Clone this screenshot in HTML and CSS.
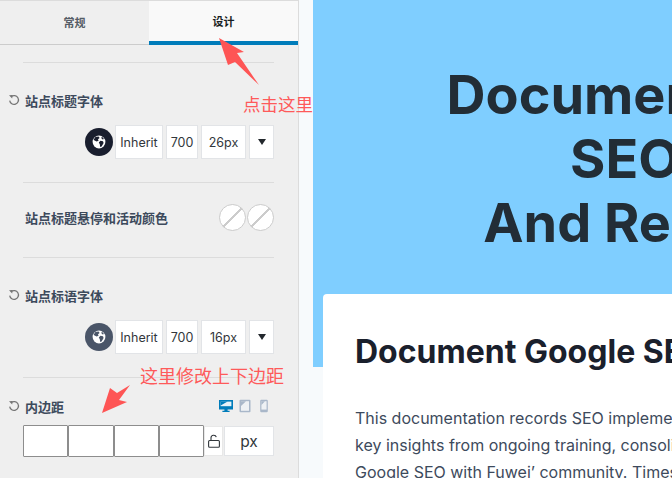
FILE: index.html
```html
<!DOCTYPE html>
<html lang="zh-CN">
<head>
  <meta charset="UTF-8" />
  <meta name="viewport" content="width=device-width, initial-scale=1.0" />
  <title>站点标题字体</title>
  <link rel="stylesheet" href="styles.css">
</head>
<body>
  <div class="page">
    <aside class="sidebar">
      <div class="tabs">
        <div class="tab">常规</div>
        <div class="tab tab-active">设计</div>
      </div>

      <div class="panel">
        <hr class="rule rule-first">

        <div class="label-row label-first">
          <svg class="reset" viewBox="0 0 12 12"><path d="M3.2 2.6A4.4 4.4 0 1 1 1.7 6.6" /><path class="reset-head" d="M1 1.2 4.6 1 4.2 4.4z" /></svg>
          <span>站点标题字体</span>
        </div>
        <div class="font-row">
          <span class="globe">
            <svg viewBox="0 0 14 14"><circle cx="7" cy="7" r="6.4" fill="#fff" /><path class="land" d="M3.4 1.9 6.6 1.4 7.6 3 6 4.2 6.6 5.8 4.6 6.6 2.6 5.4 1.6 4.8zM8.4 5.8 11 6.2 11.6 8 9.6 11.6 8.2 12 7.8 9.2 6.8 7.4zM10 1.8 12 4 10.6 4.4 9.2 3z" /></svg>
          </span>
          <div class="box box-family">Inherit</div>
          <div class="box box-weight">700</div>
          <div class="box box-size">26px</div>
          <div class="box box-more"><i class="caret"></i></div>
        </div>

        <hr class="rule rule-mid">

        <div class="color-row">
          <span class="color-label">站点标题悬停和活动颜色</span>
          <div class="swatches">
            <i class="swatch"></i>
            <i class="swatch"></i>
          </div>
        </div>

        <hr class="rule rule-color">

        <div class="label-row label-first">
          <svg class="reset" viewBox="0 0 12 12"><path d="M3.2 2.6A4.4 4.4 0 1 1 1.7 6.6" /><path class="reset-head" d="M1 1.2 4.6 1 4.2 4.4z" /></svg>
          <span>站点标语字体</span>
        </div>
        <div class="font-row">
          <span class="globe globe-soft">
            <svg viewBox="0 0 14 14"><circle cx="7" cy="7" r="6.4" fill="#fff" /><path class="land" d="M3.4 1.9 6.6 1.4 7.6 3 6 4.2 6.6 5.8 4.6 6.6 2.6 5.4 1.6 4.8zM8.4 5.8 11 6.2 11.6 8 9.6 11.6 8.2 12 7.8 9.2 6.8 7.4zM10 1.8 12 4 10.6 4.4 9.2 3z" /></svg>
          </span>
          <div class="box box-family">Inherit</div>
          <div class="box box-weight">700</div>
          <div class="box box-size">16px</div>
          <div class="box box-more"><i class="caret"></i></div>
        </div>

        <hr class="rule rule-mid">

        <div class="label-row label-padding">
          <svg class="reset" viewBox="0 0 12 12"><path d="M3.2 2.6A4.4 4.4 0 1 1 1.7 6.6" /><path class="reset-head" d="M1 1.2 4.6 1 4.2 4.4z" /></svg>
          <span>内边距</span>
          <div class="devices">
            <svg class="device" viewBox="0 0 14 14"><path fill="#007cba" d="M0 1h14v9.4H8.6v1.4h2v1.2H3.4v-1.2h2v-1.4H0z" /><path fill="#fff" d="M1.6 2.6h10.8v4.6H1.6z" opacity=".9" /><path fill="#007cba" d="M1.6 2.6h7l-7 4z" /></svg>
            <svg class="device" viewBox="0 0 14 14"><rect x="1.5" y=".8" width="11" height="12.4" rx="1" fill="#a9b7c9" /><path fill="#eef1f4" d="M3 2.2h8v9.6H3z" /><path fill="#a9b7c9" d="M3 2.2h5L3 7z" /></svg>
            <svg class="device" viewBox="0 0 14 14"><rect x="3.2" y=".8" width="7.6" height="12.4" rx="1.2" fill="#a9b7c9" /><path fill="#eef1f4" d="M4.4 2.2h5.2v8.4H4.4z" /><path fill="#a9b7c9" d="M4.4 2.2h3.6L4.4 6z" /></svg>
          </div>
        </div>
        <div class="spacing-row">
          <div class="spacing-inputs">
            <input class="spacing" type="text">
            <input class="spacing" type="text">
            <input class="spacing" type="text">
            <input class="spacing" type="text">
          </div>
          <div class="box box-lock">
            <svg viewBox="0 0 12 14"><path d="M3 6.5V3.8a2.7 2.7 0 0 1 5.3-.6" /><rect x=".6" y="6.5" width="10.8" height="6.7" rx="1" /></svg>
          </div>
          <div class="box box-unit">px</div>
        </div>
      </div>
    </aside>

    <main class="site">
      <section class="hero">
        <h1 class="hero-title">Document Google<br>SEO Ads<br>And Resources</h1>
      </section>
      <article class="card">
        <h2 class="card-title">Document Google SEO Implementation</h2>
        <p class="card-text">This documentation records SEO implementation steps and<br>key insights from ongoing training, consolidating what I learn<br>Google SEO with Fuwei’ community. Timestamps are included</p>
      </article>
    </main>
  </div>

  <!-- red notes drawn on top of the screenshot -->
  <svg class="arrows" viewBox="0 0 672 478">
    <path d="M219 38 244 52 237 53 259 85 235 62 228 65z" />
    <path d="M102 413 110 388 117 393 130 385 119 400 127 402z" />
  </svg>
  <div class="note note-click">点击这里</div>
  <div class="note note-padding">这里修改上下边距</div>
</body>
</html>
```

FILE: styles.css
```css
* {
  margin: 0;
  padding: 0;
  box-sizing: border-box;
}
html, body {
  width: 672px;
  height: 478px;
  overflow: hidden;
}
body {
  position: relative;
  background: #f7fafc;
  font-family: Inter, "Noto Sans CJK SC", sans-serif;
}
.page {
  display: flex;
  height: 478px;
}

/* sidebar */
.sidebar {
  flex: 0 0 299px;
  min-width: 0;
  height: 478px;
  background: #efefef;
  border-top: 1px solid #dcdcdc;
  border-right: 1px solid #dcdcdc;
}
.tabs {
  display: flex;
  height: 44px;
}
.tab {
  flex: 1;
  display: flex;
  align-items: center;
  justify-content: center;
  padding-bottom: 2px;
  font-size: 11px;
  font-weight: 700;
  color: #555d66;
  border-bottom: 1px solid #ccc;
}
.tab-active {
  padding-bottom: 0;
  background: #f9f9f9;
  color: #191e23;
  border-bottom: 4px solid #007cba;
}
.panel {
  padding: 0 24px 0 8px;
}
.rule {
  border: 0;
  height: 1px;
  margin-left: 15px;
  background: #dcdcdc;
}
.rule-first {
  margin-top: 17px;
}
.rule-mid {
  margin-top: 23px;
}
.rule-color {
  margin-top: 26px;
}
.label-row {
  display: flex;
  align-items: center;
  gap: 5px;
  height: 20px;
  font-size: 13px;
  font-weight: 700;
  color: #3d4a5c;
}
.label-first {
  margin-top: 27px;
}
.label-padding {
  margin-top: 18px;
}
.reset {
  width: 12px;
  height: 12px;
  fill: none;
  stroke: #757575;
  stroke-width: 1.3;
}
.reset-head {
  fill: #757575;
  stroke: none;
}
.font-row {
  display: flex;
  align-items: center;
  justify-content: flex-end;
  gap: 3px;
  margin-top: 15px;
}
.globe {
  display: flex;
  align-items: center;
  justify-content: center;
  width: 28px;
  height: 28px;
  margin-right: -1px;
  border-radius: 50%;
  background: #191e2e;
}
.globe svg {
  width: 14px;
  height: 14px;
}
.land {
  fill: #191e2e;
}
.globe-soft {
  background: #4a5568;
}
.globe-soft .land {
  fill: #4a5568;
}
.box {
  display: flex;
  align-items: center;
  justify-content: center;
  height: 34px;
  background: #fff;
  border: 1px solid #e2e4e7;
  font-size: 12.5px;
  color: #32373c;
}
.box-family {
  width: 48px;
}
.box-weight {
  width: 32px;
}
.box-size {
  width: 45px;
}
.box-more {
  width: 25px;
}
.caret {
  width: 0;
  height: 0;
  border-left: 4.5px solid transparent;
  border-right: 4.5px solid transparent;
  border-top: 6px solid #23282d;
}
.color-row {
  display: flex;
  align-items: center;
  justify-content: space-between;
  margin-top: 21px;
  margin-left: 17px;
}
.color-label {
  font-size: 13px;
  font-weight: 700;
  color: #3d4a5c;
}
.swatches {
  display: flex;
  gap: 1px;
}
.swatch {
  width: 27px;
  height: 27px;
  border-radius: 50%;
  border: 1px solid #ccc;
  background: linear-gradient(135deg, #fff 47%, #ccc 47%, #ccc 53%, #fff 53%);
}
.devices {
  display: flex;
  gap: 5px;
  margin-left: auto;
  margin-right: 3px;
}
.device {
  width: 14px;
  height: 14px;
}
.spacing-row {
  display: flex;
  align-items: center;
  margin-top: 9px;
  margin-left: 15px;
}
.spacing-inputs {
  display: flex;
}
.spacing {
  display: block;
  width: 45.25px;
  height: 32px;
  background: #fff;
  border: 1px solid #8d8d8d;
  border-radius: 1px;
}
.box-lock {
  width: 19px;
  height: 30px;
  border-color: #e8e8e8;
}
.box-lock svg {
  width: 12px;
  height: 14px;
  fill: none;
  stroke: #32373c;
  stroke-width: 1.1;
}
.box-unit {
  width: 50px;
  height: 30px;
  margin-left: 1px;
  font-size: 15.5px;
}

/* site preview */
.site {
  flex: 1;
  min-width: 0;
  margin-left: 14px;
  overflow: hidden;
}
.hero {
  width: 740px;
  height: 367px;
  padding-top: 63px;
  background: #7fceff;
}
.hero-title {
  font-size: 54px;
  line-height: 64px;
  font-weight: 700;
  text-align: center;
  color: #222d36;
  white-space: nowrap;
}
.card {
  width: 800px;
  margin: -73px 0 0 10px;
  padding: 39px 32px;
  height: 300px;
  background: #fff;
  border-radius: 4px;
}
.card-title {
  font-size: 32px;
  line-height: 38px;
  font-weight: 700;
  color: #1a202c;
  white-space: nowrap;
}
.card-text {
  margin-top: 34px;
  font-size: 16px;
  line-height: 27px;
  color: #3d4a5c;
  white-space: nowrap;
}

/* annotations */
.arrows {
  position: absolute;
  left: 0;
  top: 0;
  width: 672px;
  height: 478px;
  fill: #fe5555;
}
.note {
  position: absolute;
  color: #fe5a5a;
  line-height: 24px;
  white-space: nowrap;
}
.note-click {
  left: 243px;
  top: 93px;
  font-size: 17.5px;
}
.note-padding {
  left: 140px;
  top: 365px;
  font-size: 18px;
}
```
